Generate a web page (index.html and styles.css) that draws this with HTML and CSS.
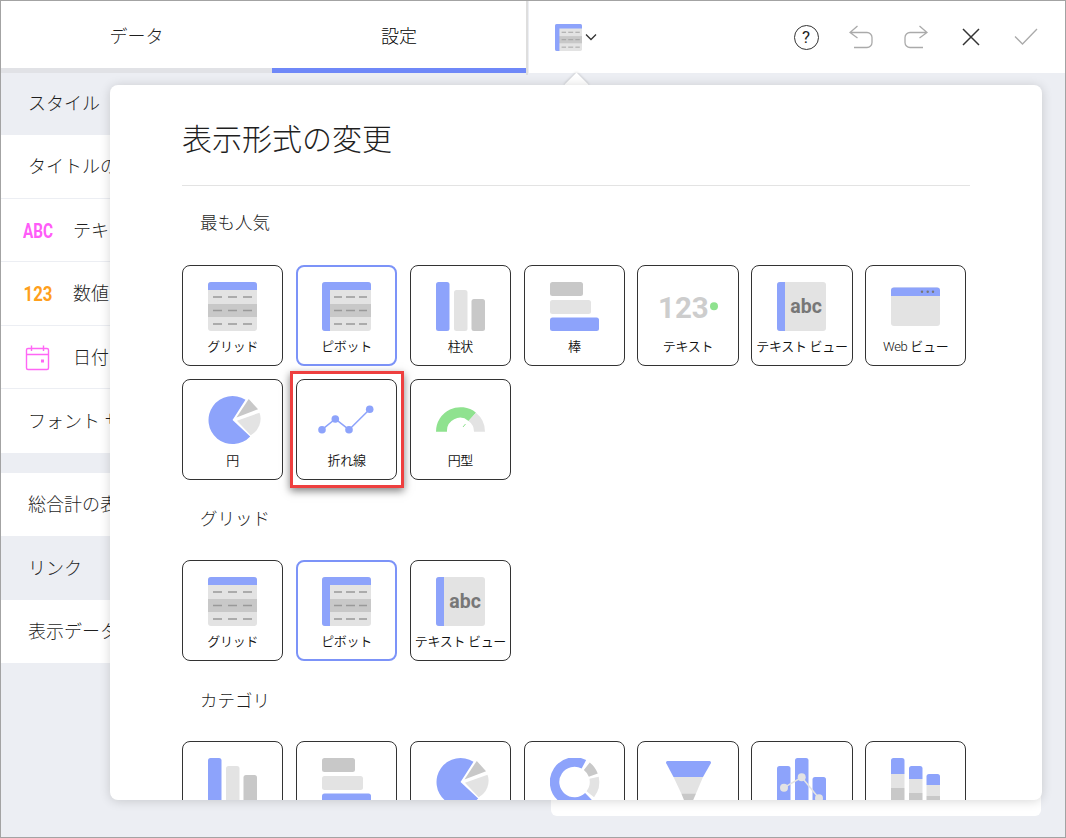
FILE: index.html
```html
<!DOCTYPE html>
<html lang="ja">
<head>
<meta charset="utf-8">
<title>表示形式の変更</title>
<link rel="stylesheet" href="styles.css">
</head>
<body>
<svg class="defs" width="0" height="0" aria-hidden="true">
  <defs>
    <symbol id="i-grid" viewBox="0 0 49 49">
      <rect width="49" height="49" rx="3" fill="#e3e3e3"/>
      <rect y="22" width="49" height="13" fill="#c8c8c8"/>
      <path d="M3 0h43a3 3 0 0 1 3 3v5H0V3a3 3 0 0 1 3-3z" fill="#8da3fb"/>
      <path d="M5 15h9M20 15h9M35 15h9M5 28.500h9M20 28.500h9M35 28.500h9M5 42h9M20 42h9M35 42h9" stroke="#999" stroke-width="1.500"/>
    </symbol>
    <symbol id="i-pivot" viewBox="0 0 49 49">
      <rect width="49" height="49" rx="3" fill="#e3e3e3"/>
      <rect y="22" width="49" height="13" fill="#c8c8c8"/>
      <path d="M3 0h43a3 3 0 0 1 3 3v5H8v41H3a3 3 0 0 1-3-3V3a3 3 0 0 1 3-3z" fill="#8da3fb"/>
      <path d="M12 15h8M24 15h9M37 15h8M12 28.500h8M24 28.500h9M37 28.500h8M12 42h8M24 42h9M37 42h8" stroke="#999" stroke-width="1.500"/>
    </symbol>
    <symbol id="i-column" viewBox="0 0 49 49">
      <rect width="13.500" height="49" rx="2.500" fill="#8da3fb"/>
      <rect x="18" y="8" width="13.500" height="41" rx="2.500" fill="#e3e3e3"/>
      <rect x="35.500" y="17" width="13.500" height="32" rx="2.500" fill="#c8c8c8"/>
    </symbol>
    <symbol id="i-bar" viewBox="0 0 49 49">
      <rect width="33" height="14" rx="2.500" fill="#c8c8c8"/>
      <rect y="18" width="41" height="14" rx="2.500" fill="#e3e3e3"/>
      <rect y="35.500" width="49" height="13.500" rx="2.500" fill="#8da3fb"/>
    </symbol>
    <symbol id="i-number" viewBox="0 0 66 49">
      <text class="svg-num" x="0" y="35.500">123</text>
      <circle cx="56" cy="24.300" r="4" fill="#8fe28f"/>
    </symbol>
    <symbol id="i-textview" viewBox="0 0 49 49">
      <rect width="49" height="49" rx="3" fill="#e3e3e3"/>
      <path d="M3 0h5v49H3a3 3 0 0 1-3-3V3a3 3 0 0 1 3-3z" fill="#8da3fb"/>
      <text class="svg-abc" x="13.300" y="30.700">abc</text>
    </symbol>
    <symbol id="i-web" viewBox="0 0 49 49">
      <rect y="5.500" width="49" height="38.500" rx="3" fill="#e3e3e3"/>
      <path d="M3 5.500h43a3 3 0 0 1 3 3v5.500H0V8.500a3 3 0 0 1 3-3z" fill="#8da3fb"/>
      <circle cx="31" cy="9.800" r="1.200" fill="#777"/>
      <circle cx="36.700" cy="9.800" r="1.200" fill="#777"/>
      <circle cx="42" cy="9.800" r="1.200" fill="#777"/>
    </symbol>
    <symbol id="i-pie" viewBox="0 0 54 49">
      <path d="M25 24L38.200 3.400A24.500 24.500 0 1 0 43 40.700Z" fill="#8da3fb"/>
      <path d="M29 21.500L41.500 2.500 51 13Z" fill="#c8c8c8"/>
      <path d="M29.500 24.700L52.500 16.500A19 19 0 0 1 43.500 39.500Z" fill="#e3e3e3"/>
    </symbol>
    <symbol id="i-line" viewBox="-4 0 57 49">
      <path d="M0 33.700L13.300 23 27 33.700 47.700 13.300" fill="none" stroke="#8da3fb" stroke-width="1.500"/>
      <circle cx="0" cy="33.700" r="3.800" fill="#8da3fb"/>
      <circle cx="13.300" cy="23" r="3.800" fill="#8da3fb"/>
      <circle cx="27" cy="33.700" r="3.800" fill="#8da3fb"/>
      <circle cx="47.700" cy="13.300" r="3.800" fill="#8da3fb"/>
    </symbol>
    <symbol id="i-gauge" viewBox="0 0 49 49">
      <path d="M0 35.700A24.500 24.500 0 0 1 40 16.700L32.500 25A13 13 0 0 0 11 35.700Z" fill="#8fe28f"/>
      <path d="M40 16.700A24.500 24.500 0 0 1 49 35.700H38A13 13 0 0 0 32.500 25Z" fill="#e3e3e3"/>
      <path d="M27 31L29.500 28" stroke="#8fe28f" stroke-width="1"/>
    </symbol>
    <symbol id="i-donut" viewBox="0 0 53 49">
      <path d="M33.900 6.300A20 20 0 1 0 38.400 38.400" fill="none" stroke="#8da3fb" stroke-width="9.500"/>
      <path d="M36.800 8.200A20 20 0 0 1 43.300 17.200" fill="none" stroke="#c8c8c8" stroke-width="9.500"/>
      <path d="M44.100 19.800A20 20 0 0 1 40.300 36.300" fill="none" stroke="#e3e3e3" stroke-width="9.500"/>
    </symbol>
    <symbol id="i-funnel" viewBox="0 0 49 49">
      <path d="M3.500 3h42a1.500 1.500 0 0 1 1.300 2.200L39 19H9.500L2.200 5.200A1.500 1.500 0 0 1 3.500 3z" fill="#8da3fb"/>
      <path d="M9.500 19H39L32 35.500H17.300Z" fill="#e3e3e3"/>
      <path d="M17.300 35.500H32L27 47H22Z" fill="#c8c8c8"/>
    </symbol>
    <symbol id="i-combo" viewBox="0 0 49 49">
      <rect y="8" width="13.500" height="41" rx="2.500" fill="#8da3fb"/>
      <rect x="18" width="13.500" height="49" rx="2.500" fill="#8da3fb"/>
      <rect x="35.500" y="19" width="13.500" height="30" rx="2.500" fill="#8da3fb"/>
      <path d="M7 29.700L24.700 19.300 42 40.300" fill="none" stroke="#e3e3e3" stroke-width="1.500"/>
      <circle cx="7" cy="29.700" r="4" fill="#e3e3e3"/>
      <circle cx="24.700" cy="19.300" r="4" fill="#e3e3e3"/>
      <circle cx="42" cy="40.300" r="4" fill="#e3e3e3"/>
    </symbol>
    <symbol id="i-stack" viewBox="0 0 49 49">
      <path d="M2.500 0h8.500a2.500 2.500 0 0 1 2.500 2.500V16H0V2.500A2.500 2.500 0 0 1 2.500 0z" fill="#8da3fb"/>
      <rect y="16" width="13.500" height="14" fill="#e3e3e3"/>
      <rect y="30" width="13.500" height="19" fill="#c8c8c8"/>
      <path d="M20.500 8h8.500a2.500 2.500 0 0 1 2.500 2.500V21H18V10.500A2.500 2.500 0 0 1 20.500 8z" fill="#8da3fb"/>
      <rect x="18" y="21" width="13.500" height="14" fill="#e3e3e3"/>
      <rect x="18" y="35" width="13.500" height="14" fill="#c8c8c8"/>
      <path d="M38 16h8.500a2.500 2.500 0 0 1 2.500 2.500V27H35.500v-8.500A2.500 2.500 0 0 1 38 16z" fill="#8da3fb"/>
      <rect x="35.500" y="27" width="13.500" height="11" fill="#e3e3e3"/>
      <rect x="35.500" y="38" width="13.500" height="11" fill="#c8c8c8"/>
    </symbol>
  </defs>
</svg>

<div class="app">
  <aside class="left">
    <nav class="tabs">
      <div class="tab">データ</div>
      <div class="tab tab-active">設定</div>
    </nav>
    <div class="row row-gray row-first">スタイル</div>
    <div class="row">タイトルの表示</div>
    <div class="row">
      <svg class="row-icon" width="30" height="20" viewBox="0 0 30 20"><text class="svg-abc-tag" x="0" y="17" textLength="30" lengthAdjust="spacingAndGlyphs">ABC</text></svg>
      テキスト
    </div>
    <div class="row">
      <svg class="row-icon" width="30" height="20" viewBox="0 0 30 20"><text class="svg-num-tag" x="0.500" y="17" textLength="29" lengthAdjust="spacingAndGlyphs">123</text></svg>
      数値
    </div>
    <div class="row">
      <svg class="row-icon" width="30" height="26" viewBox="0 0 30 26">
        <path d="M5 3.500H24a1.500 1.500 0 0 1 1.500 1.500V23a1.500 1.500 0 0 1-1.500 1.500H5A1.500 1.500 0 0 1 3.500 23V5A1.500 1.500 0 0 1 5 3.500zM3.500 9.500H25.500M8.500 0.500V6M20.500 0.500V6" fill="none" stroke="#ff66f5" stroke-width="1.400"/>
        <rect x="18" y="14.500" width="3" height="3" fill="#ff66f5"/>
      </svg>
      日付
    </div>
    <div class="row row-last">フォント サイズ</div>
    <div class="row row-group">総合計の表示</div>
    <div class="row row-gray">リンク</div>
    <div class="row">表示データ</div>
  </aside>

  <div class="divider"></div>

  <main class="right">
    <header class="toolbar">
      <div class="type-switch">
        <svg class="type-icon" width="27" height="27"><use href="#i-pivot"/></svg>
        <svg width="12" height="8" viewBox="0 0 12 8"><path d="M1 1.500L6 6.500 11 1.500" fill="none" stroke="#333" stroke-width="1.300"/></svg>
      </div>
      <div class="actions">
        <span class="action"><span class="help">?</span></span>
        <span class="action"><svg width="24" height="24" viewBox="0 0 24 24"><path d="M8.500 1L1 7.500 8.500 13M1 7.500H18a5 5 0 0 1 5 5v5a5 5 0 0 1-5 5H5" fill="none" stroke="#aaa" stroke-width="1.300"/></svg></span>
        <span class="action"><svg width="24" height="24" viewBox="0 0 24 24"><path d="M15.500 1L23 7.500 15.500 13M23 7.500H6a5 5 0 0 0-5 5v5a5 5 0 0 0 5 5h13" fill="none" stroke="#aaa" stroke-width="1.300"/></svg></span>
        <span class="action"><svg width="18" height="18" viewBox="0 0 18 18"><path d="M1 1L17 17M17 1L1 17" fill="none" stroke="#333" stroke-width="1.500"/></svg></span>
        <span class="action"><svg width="24" height="18" viewBox="0 0 24 18"><path d="M1 8.500L8.500 16 23 1" fill="none" stroke="#aaa" stroke-width="1.300"/></svg></span>
      </div>
    </header>
    <div class="card"></div>
  </main>

  <span class="arrow"></span>
  <section class="modal">
    <h1 class="modal-title">表示形式の変更</h1>
    <h2 class="group group-top">最も人気</h2>
    <div class="tiles">
      <div class="tile"><svg class="icon"><use href="#i-grid"/></svg><span class="label">グリッド</span></div>
      <div class="tile tile-selected"><svg class="icon"><use href="#i-pivot"/></svg><span class="label">ピボット</span></div>
      <div class="tile"><svg class="icon"><use href="#i-column"/></svg><span class="label">柱状</span></div>
      <div class="tile"><svg class="icon"><use href="#i-bar"/></svg><span class="label">棒</span></div>
      <div class="tile"><svg class="icon icon-wide"><use href="#i-number"/></svg><span class="label">テキスト</span></div>
      <div class="tile"><svg class="icon"><use href="#i-textview"/></svg><span class="label">テキスト ビュー</span></div>
      <div class="tile"><svg class="icon"><use href="#i-web"/></svg><span class="label">Web ビュー</span></div>
      <div class="tile"><svg class="icon icon-pie"><use href="#i-pie"/></svg><span class="label">円</span></div>
      <div class="tile tile-marked"><svg class="icon icon-line"><use href="#i-line"/></svg><span class="label">折れ線</span><span class="marker"></span></div>
      <div class="tile"><svg class="icon"><use href="#i-gauge"/></svg><span class="label">円型</span></div>
    </div>
    <h2 class="group">グリッド</h2>
    <div class="tiles">
      <div class="tile"><svg class="icon"><use href="#i-grid"/></svg><span class="label">グリッド</span></div>
      <div class="tile tile-selected"><svg class="icon"><use href="#i-pivot"/></svg><span class="label">ピボット</span></div>
      <div class="tile"><svg class="icon"><use href="#i-textview"/></svg><span class="label">テキスト ビュー</span></div>
    </div>
    <h2 class="group group-last">カテゴリ</h2>
    <div class="tiles">
      <div class="tile"><svg class="icon"><use href="#i-column"/></svg></div>
      <div class="tile"><svg class="icon"><use href="#i-bar"/></svg></div>
      <div class="tile"><svg class="icon icon-pie"><use href="#i-pie"/></svg></div>
      <div class="tile"><svg class="icon icon-pie"><use href="#i-donut"/></svg></div>
      <div class="tile"><svg class="icon"><use href="#i-funnel"/></svg></div>
      <div class="tile"><svg class="icon"><use href="#i-combo"/></svg></div>
      <div class="tile"><svg class="icon"><use href="#i-stack"/></svg></div>
    </div>
  </section>
</div>
</body>
</html>
```

FILE: styles.css
```css
* { box-sizing: border-box; }

html, body {
  margin: 0;
  height: 100%;
}

body {
  font-family: Roboto, "Noto Sans CJK JP", sans-serif;
  font-weight: 300;
  color: #1f1f1f;
  background: #eceef3;
}

.defs { position: absolute; }

.app {
  position: relative;
  display: flex;
  width: 1066px;
  height: 838px;
  border: 1px solid #a3a3a3;
  background: #eceef3;
  overflow: hidden;
}

/* left settings panel */
.left {
  width: 525px;
  flex: none;
  display: flex;
  flex-direction: column;
}

.tabs {
  display: flex;
  height: 72px;
  flex: none;
  background: #fff;
  box-shadow: inset 0 -5px 0 #e1e2e6;
}

.tab {
  height: 72px;
  padding-bottom: 5px;
  display: flex;
  align-items: center;
  justify-content: center;
  font-size: 18px;
  width: 271px;
}

.tab-active {
  width: 254px;
  color: #000;
  border-bottom: 5px solid #6f88f8;
  padding-bottom: 0;
}

.row {
  height: 63.600px;
  flex: none;
  display: flex;
  align-items: center;
  gap: 21px;
  padding: 0 0 2px 27px;
  background: #fff;
  border-bottom: 1px solid #eceef3;
  font-size: 18px;
  white-space: nowrap;
}

.row-icon {
  margin: 4px -1px 0 -5px;
  flex: none;
}

.row-first {
  height: 62px;
  padding-bottom: 4px;
}

.row-gray {
  background: #eceef3;
  border-bottom: 0;
}

.row-last { border-bottom: 0; }

.row-group { margin-top: 20px; }

.divider {
  width: 2px;
  height: 74px;
  flex: none;
  background: #dedede;
}

/* right pane */
.right {
  flex: 1;
  display: flex;
  flex-direction: column;
  min-width: 0;
}

.toolbar {
  height: 72px;
  flex: none;
  margin-left: 1px;
  background: #fff;
  display: flex;
  align-items: center;
  justify-content: space-between;
  padding: 0 11.500px 0 26px;
}

.type-switch {
  display: flex;
  align-items: center;
  gap: 3px;
}

.type-icon { display: block; }

.actions { display: flex; }

.action {
  width: 55px;
  display: flex;
  align-items: center;
  justify-content: center;
}

.help {
  width: 25px;
  height: 25px;
  border: 1.500px solid #333;
  border-radius: 50%;
  display: flex;
  align-items: center;
  justify-content: center;
  font-size: 17px;
  font-weight: 400;
}

.card {
  margin: 17px 24px 21px 23px;
  flex: 1;
  background: #fff;
  border-radius: 6px;
}

/* popover */
.arrow {
  position: absolute;
  left: 567px;
  top: 75px;
  width: 17px;
  height: 17px;
  background: #fff;
  transform: rotate(45deg);
  box-shadow: 0 0 3px rgba(0, 0, 0, .25);
}

.modal {
  position: absolute;
  left: 109px;
  top: 84px;
  width: 932px;
  height: 715px;
  padding: 36px 72px 0;
  background: #fff;
  border-radius: 8px;
  box-shadow: 0 1px 11px rgba(0, 0, 0, .16);
  overflow: hidden;
}

.modal-title {
  margin: 0;
  height: 65px;
  padding-bottom: 26px;
  border-bottom: 1px solid #e3e3e3;
  font-size: 30px;
  line-height: 38px;
  font-weight: 300;
}

.group {
  margin: 27px 0 29px 18px;
  font-size: 17.500px;
  line-height: 24px;
  font-weight: 300;
}

.group-top { margin: 25px 0 30px 18px; }
.group-last { margin: 28px 0 28px 18px; }

.tiles {
  display: grid;
  grid-template-columns: repeat(7, 101.400px);
  grid-auto-rows: 101px;
  gap: 13px 12.460px;
}

.tile {
  position: relative;
  display: flex;
  flex-direction: column;
  align-items: center;
  padding-top: 16px;
  background: #fff;
  border: 1px solid #333;
  border-radius: 8px;
}

.tile-selected {
  border: 2px solid #7c93f8;
  padding-top: 15px;
}

.icon {
  width: 49px;
  height: 49px;
  flex: none;
  display: block;
}

.icon-wide { width: 66px; margin-left: 5px; }
.icon-pie { width: 53px; margin-left: 4px; }
.icon-line { width: 57px; }

.label {
  margin-top: 8px;
  font-size: 13px;
  line-height: 16px;
  font-weight: 350;
  color: #111;
  letter-spacing: -.3px;
  white-space: nowrap;
}

.marker {
  position: absolute;
  left: -7px;
  top: -9px;
  right: -8px;
  bottom: -9px;
  border: 3px solid #ee3f3f;
  box-shadow: 0 3px 8px rgba(0, 0, 0, .5);
  pointer-events: none;
}

/* text inside svg icons */
.svg-num {
  font: 700 29.500px Roboto, sans-serif;
  fill: #cdcdcd;
}

.svg-abc {
  font: 700 19.500px Roboto, sans-serif;
  fill: #777;
}

.svg-abc-tag {
  font: 700 20px Roboto, sans-serif;
  fill: #ff5cf8;
}

.svg-num-tag {
  font: 700 20px Roboto, sans-serif;
  fill: #ff9f1c;
}
```
